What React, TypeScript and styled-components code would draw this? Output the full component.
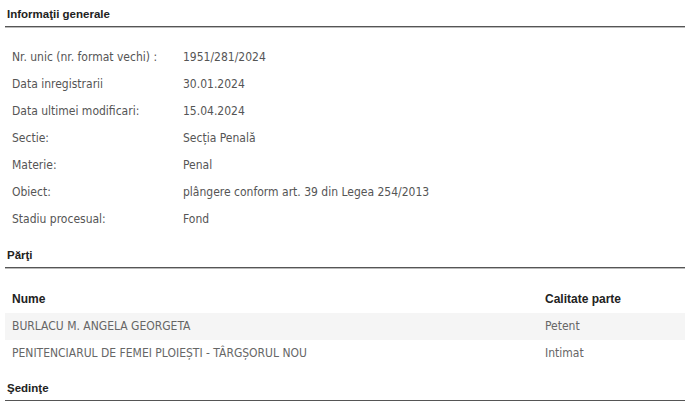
import React from "react";
import styled, { createGlobalStyle } from "styled-components";

const Global = createGlobalStyle`
  html, body { margin: 0; padding: 0; background: #fff; }
  body {
    font-family: "DejaVu Sans Condensed", "DejaVu Sans", sans-serif;
    font-stretch: condensed;
    font-size: 12px;
    color: #444;
  }
`;

const Page = styled.div`
  width: 680px;
  padding: 0 0 0 5px;
`;

const SectionTitle = styled.div<{ $top: number }>`
  margin-top: ${(p) => p.$top}px;
  padding: 0 0 4px 2px;
  line-height: 15px;
  font-family: "Liberation Sans", Arial, sans-serif;
  font-stretch: normal;
  font-weight: bold;
  font-size: 11.5px;
  color: #222;
  border-bottom: 1px solid #555;
  box-shadow: 0 1px 0 #bbb;
`;

const InfoList = styled.div`
  display: grid;
  grid-template-columns: 171px 1fr;
  margin-top: 17px;
  padding-left: 7px;
`;

const Label = styled.div`
  height: 27px;
  line-height: 27px;
  color: #555;
`;

const Value = styled.div`
  height: 27px;
  line-height: 27px;
  color: #555;
`;

const Table = styled.div`
  margin-top: 18px;
`;

const Row = styled.div<{ $head?: boolean; $striped?: boolean }>`
  display: grid;
  grid-template-columns: 533px 1fr;
  height: 27px;
  line-height: 27px;
  padding-left: 7px;
  background: ${(p) => (p.$striped ? "#f5f5f5" : "transparent")};
  color: ${(p) => (p.$head ? "#222" : "#666")};
  font-weight: ${(p) => (p.$head ? "bold" : "normal")};
  ${(p) =>
    p.$head
      ? `font-family: "Liberation Sans", Arial, sans-serif; font-stretch: normal;`
      : ""}
`;

const info: [string, string][] = [
  ["Nr. unic (nr. format vechi) :", "1951/281/2024"],
  ["Data inregistrarii", "30.01.2024"],
  ["Data ultimei modificari:", "15.04.2024"],
  ["Sectie:", "Secția Penală"],
  ["Materie:", "Penal"],
  ["Obiect:", "plângere conform art. 39 din Legea 254/2013"],
  ["Stadiu procesual:", "Fond"],
];

const parti: [string, string][] = [
  ["BURLACU M. ANGELA GEORGETA", "Petent"],
  ["PENITENCIARUL DE FEMEI PLOIEȘTI - TÂRGȘORUL NOU", "Intimat"],
];

export default function App() {
  return (
    <>
      <Global />
      <Page>
        <SectionTitle $top={7}>Informaţii generale</SectionTitle>
        <InfoList>
          {info.map(([l, v]) => (
            <React.Fragment key={l}>
              <Label>{l}</Label>
              <Value>{v}</Value>
            </React.Fragment>
          ))}
        </InfoList>
        <SectionTitle $top={15}>Părţi</SectionTitle>
        <Table>
          <Row $head>
            <div>Nume</div>
            <div>Calitate parte</div>
          </Row>
          {parti.map(([n, c], i) => (
            <Row key={n} $striped={i % 2 === 0}>
              <div>{n}</div>
              <div>{c}</div>
            </Row>
          ))}
        </Table>
        <SectionTitle $top={14}>Şedinţe</SectionTitle>
      </Page>
    </>
  );
}
